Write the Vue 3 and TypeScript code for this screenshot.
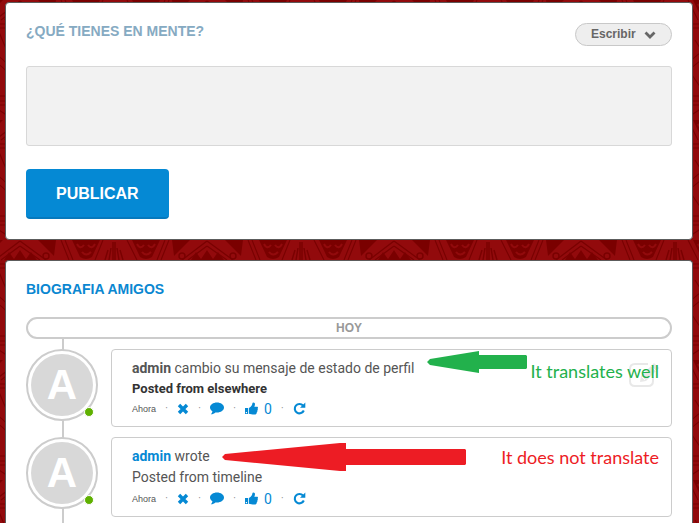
<script setup lang="ts">
import { ref } from 'vue'

interface Post {
  id: number
  author: string
  linked: boolean
  action: string
  body: string
  strong: boolean
  likes: number
}

const message = ref('')
const mode = ref('Escribir')

const posts = ref<Post[]>([
  {
    id: 1,
    author: 'admin',
    linked: false,
    action: 'cambio su mensaje de estado de perfil',
    body: 'Posted from elsewhere',
    strong: true,
    likes: 0,
  },
  {
    id: 2,
    author: 'admin',
    linked: true,
    action: 'wrote',
    body: 'Posted from timeline',
    strong: false,
    likes: 0,
  },
])

function removePost(id: number) {
  posts.value = posts.value.filter((p) => p.id !== id)
}
</script>

<template>
  <div class="page">
    <svg class="backdrop" aria-hidden="true">
      <defs>
        <pattern id="weave" x="114" y="240" width="187" height="120" patternUnits="userSpaceOnUse">
          <rect width="187" height="120" fill="#920a0c" />
          <g fill="#7a0000">
            <path d="M18 0H46L38 17Q32 21 26 17Z M145 0H173L165 17Q159 21 153 17Z" />
            <path d="M58 0H76L60 16Z M111 0H129L127 16Z" />
            <path d="M77 20L82 12L87 19L93 10L99 19L104 12L110 20Z" />
          </g>
          <g fill="none" stroke="#920a0c" stroke-width="2">
            <path d="M23 4q3 6 7 1M34 5q4 5 7-1M28 12q4 5 9 0M150 4q3 6 7 1M161 5q4 5 7-1M155 12q4 5 9 0" />
          </g>
          <g fill="none" stroke="#7a0000" stroke-width="1.5">
            <path d="M1 2V20M3 8L5 20M6 10L9 20M186 2V20M184 8L182 20M181 10L178 20" />
            <path d="M13 0L23 20M51 0L43 20M55 0L47 20M138 0L146 20M134 0L142 20M176 0L168 20" stroke-width="1.200" />
            <path d="M93 1L68 20M93 1L119 20M93 6L74 20M93 6L113 20" />
            <circle cx="68" cy="16" r="3" />
            <circle cx="119" cy="16" r="3" />
          </g>
          <g fill="none" stroke="#7a0000" stroke-width="1.2">
            <path d="M0 24H187M0 28H187M0 96H187M0 101H187M0 105H187" />
            <path d="M0 88Q46 20 93 88T187 88M0 80Q46 12 93 80T187 80M0 50L30 94M20 40L54 94M72 32L98 94M110 32L84 94M150 32L120 94M187 40L140 94" />
            <path d="M0 110L12 118L24 110L36 118L48 110L60 118L72 110L84 118L96 110L108 118L120 110L132 118L144 110L156 118L168 110L180 118L187 113" />
          </g>
        </pattern>
      </defs>
      <rect width="100%" height="100%" fill="url(#weave)" />
    </svg>

    <form class="card composer" @submit.prevent>
      <header class="composer-head">
        <label class="title muted" for="message">¿QUÉ TIENES EN MENTE?</label>
        <div class="mode">
          <select v-model="mode" aria-label="Escribir">
            <option>Escribir</option>
          </select>
          <svg class="chevron" viewBox="0 0 12 8" aria-hidden="true">
            <path d="M1.5 1.5L6 6L10.500 1.500" fill="none" stroke="#666" stroke-width="2.800" />
          </svg>
        </div>
      </header>
      <textarea id="message" v-model="message"></textarea>
      <button class="publish" type="submit">PUBLICAR</button>
    </form>

    <section class="card feed">
      <h2 class="title">BIOGRAFIA AMIGOS</h2>
      <div class="day">HOY</div>
      <div class="timeline">
        <article v-for="post in posts" :key="post.id" class="entry">
          <div class="avatar">
            <span class="face">A</span>
            <i class="online"></i>
          </div>
          <div class="bubble">
            <p class="line">
              <a v-if="post.linked" class="author" href="#">{{ post.author }}</a>
              <b v-else class="author">{{ post.author }}</b>
              {{ post.action }}
            </p>
            <p class="line" :class="{ strong: post.strong }">{{ post.body }}</p>
            <div class="actions">
              <span class="time">Ahora</span>
              <span class="dot">·</span>
              <button type="button" aria-label="Eliminar" @click="removePost(post.id)">
                <svg width="12" height="12" viewBox="0 0 12 12">
                  <path d="M2 2L10 10M10 2L2 10" stroke="currentColor" stroke-width="3.400" />
                </svg>
              </button>
              <span class="dot">·</span>
              <button type="button" aria-label="Comentar">
                <svg width="14" height="13" viewBox="0 0 14 13">
                  <path d="M7 .5C3.200.5 0 2.700 0 5.500C0 7 .9 8.400 2.400 9.300C2.200 10.600 1.600 11.500.8 12.300C2.800 12.200 4.300 11.500 5.400 10.400C10.200 11 14 8.700 14 5.500C14 2.700 10.800.5 7 .5Z" fill="currentColor" />
                </svg>
              </button>
              <span class="dot">·</span>
              <button class="like" type="button" aria-label="Me gusta" @click="post.likes++">
                <svg width="13" height="13" viewBox="0 0 13 13">
                  <path fill-rule="evenodd" d="M0 6H3V12H0ZM.8 10V11.200H2V10ZM3.800 6C5 5.700 6.500 4 7 3C7.300 2.200 7.200.5 8.300.5C10.500.5 10.200 3 9.300 4.800H12C13 4.800 13.300 6 12.600 6.700C13 7.500 12.900 8.200 12.300 8.700C12.500 9.500 12.200 10.200 11.700 10.500C11.800 12 11 12.500 9.500 12.500C7 12.500 5.500 11.800 3.800 11.700Z" fill="currentColor" />
                </svg>
                <span>{{ post.likes }}</span>
              </button>
              <span class="dot">·</span>
              <button type="button" aria-label="Compartir">
                <svg width="13" height="13" viewBox="0 0 13 13">
                  <path d="M10 3.500A4.700 4.700 0 1 0 10.800 8.500" fill="none" stroke="currentColor" stroke-width="2.100" />
                  <path d="M12.300.5V5.800H7Z" fill="currentColor" />
                </svg>
              </button>
            </div>
            <svg v-if="post.strong" class="edit" viewBox="0 0 30 26" aria-hidden="true">
              <path d="M19 2H6Q1 2 1 7V19Q1 24 6 24H19Q24 24 24 19V15" fill="none" stroke="#e8e8e8" stroke-width="2" />
              <path d="M12 14L23 3L25 1L30 6L28 8L17 19L11 20Z" fill="#e8e8e8" />
              <path d="M13 15L16 18M22 4L27 9" stroke="#fff" stroke-width="1" />
            </svg>
            <div v-if="!post.linked" class="note good">
              <svg width="100" height="22" viewBox="0 0 100 22" aria-hidden="true">
                <path d="M0 11L3 8L52 0V4H99L100 5V17L99 18H52V22L3 14Z" fill="#22b14c" />
              </svg>
              <span>It translates well</span>
            </div>
            <div v-else class="note bad">
              <svg width="244" height="28" viewBox="0 0 244 28" aria-hidden="true">
                <path d="M0 14L3 11L118 0H124V6H243L244 7V21L243 22H124V28H118L3 17Z" fill="#ed1c24" />
              </svg>
              <span>It does not translate</span>
            </div>
          </div>
        </article>
      </div>
    </section>
  </div>
</template>

<style>
body {
  margin: 0;
  background: #920a0c;
}
</style>

<style scoped>
* {
  box-sizing: border-box;
}

.page {
  position: relative;
  display: flex;
  flex-direction: column;
  gap: 20px;
  height: 100vh;
  overflow: hidden;
  padding: 2px 6px 0 5px;
  font-family: 'Liberation Sans', Arial, sans-serif;
  color: #555;
}

.backdrop {
  position: absolute;
  inset: 0;
  width: 100%;
  height: 100%;
}

.card {
  position: relative;
  padding: 20px;
  border: 1px solid #5c5c5c;
  border-radius: 4px;
  background: #fff;
}

.composer {
  flex: none;
  display: flex;
  flex-direction: column;
  align-items: flex-start;
}

.composer-head {
  display: flex;
  justify-content: space-between;
  align-items: flex-start;
  width: 100%;
}

.title {
  margin: 0;
  font-size: 14px;
  line-height: 16px;
  font-weight: bold;
  color: #0a87d1;
}

.title.muted {
  color: #86aac2;
}

.mode {
  position: relative;
}

.mode select {
  display: block;
  appearance: none;
  width: 97px;
  height: 23px;
  padding: 0 15px 2px;
  border: 1px solid #c8c8c8;
  border-radius: 12px;
  background: #eee;
  font: bold 12px 'Liberation Sans', Arial, sans-serif;
  color: #666;
}

.chevron {
  position: absolute;
  top: 8px;
  right: 16px;
  width: 12px;
  height: 8px;
  pointer-events: none;
}

textarea {
  display: block;
  width: 100%;
  height: 80px;
  margin: 20px 0 23px;
  padding: 10px;
  border: 1px solid #d8d8d8;
  border-radius: 3px;
  background: #f2f2f2;
  font: 14px 'Liberation Sans', Arial, sans-serif;
  resize: none;
}

.publish {
  height: 50px;
  padding: 2px 30px 0;
  border: 0;
  border-bottom: 2px solid #0679bd;
  border-radius: 4px;
  background: #0589d4;
  color: #fff;
  font: bold 16px 'Liberation Sans', Arial, sans-serif;
}

.feed {
  flex: 1;
  min-height: 0;
  display: flex;
  flex-direction: column;
  border-bottom: 0;
  border-radius: 4px 4px 0 0;
  padding-bottom: 0;
}

.day {
  flex: none;
  margin-top: 20px;
  border: 2px solid #ccc;
  border-radius: 11px;
  font-size: 12px;
  line-height: 18px;
  font-weight: bold;
  text-align: center;
  color: #999;
}

.timeline {
  position: relative;
  flex: 1;
  display: flex;
  flex-direction: column;
  gap: 10px;
  padding-top: 10px;
}

.timeline::before {
  content: '';
  position: absolute;
  top: 0;
  bottom: 0;
  left: 36px;
  width: 2px;
  background: #ccc;
}

.entry {
  display: flex;
  gap: 13px;
}

.avatar {
  position: relative;
  flex: none;
  width: 72px;
  height: 72px;
  padding: 3px;
  border: 2px solid #ccc;
  border-radius: 50%;
  background: #fff;
}

.face {
  display: block;
  height: 62px;
  border-radius: 50%;
  background: #d8d8d8;
  color: #fff;
  font: bold 42px/62px 'Liberation Sans', Arial, sans-serif;
  text-align: center;
}

.online {
  position: absolute;
  right: 2px;
  bottom: 2px;
  width: 10px;
  height: 10px;
  border: 1px solid #fff;
  border-radius: 50%;
  background: #5fb000;
}

.bubble {
  position: relative;
  flex: 1;
  min-width: 0;
  padding: 8px 20px 7px;
  border: 1px solid #ccc;
  border-radius: 4px;
  background: #fff;
  font-family: Roboto, sans-serif;
}

.line {
  margin: 0;
  font-size: 14px;
  line-height: 21px;
}

.line.strong {
  font-size: 13px;
  line-height: 19px;
  font-weight: bold;
  color: #333;
}

.author {
  font-weight: bold;
  text-decoration: none;
}

a.author {
  color: #0589d4;
}

.actions {
  display: flex;
  align-items: center;
  height: 21px;
}

.actions button {
  display: flex;
  align-items: center;
  gap: 6px;
  padding: 0;
  border: 0;
  background: none;
  color: #0589d4;
  font: 14px Roboto, sans-serif;
  cursor: pointer;
}

.actions svg {
  display: block;
}

.time {
  font: 9px/12px 'Liberation Sans', Arial, sans-serif;
}

.dot {
  width: 21px;
  font-size: 10px;
  text-align: center;
  color: #888;
}

.edit {
  position: absolute;
  top: 12px;
  right: 12px;
  width: 30px;
  height: 26px;
}

.note {
  position: absolute;
  right: 12px;
  display: flex;
  align-items: center;
  font: 18px/20px Lato, sans-serif;
  white-space: nowrap;
}

.note.good {
  top: 1px;
  gap: 3px;
  align-items: flex-start;
  color: #22b14c;
}

.note.good span {
  padding-top: 10px;
}

.note.bad {
  top: 5px;
  gap: 35px;
  color: #ed1c24;
}
</style>
